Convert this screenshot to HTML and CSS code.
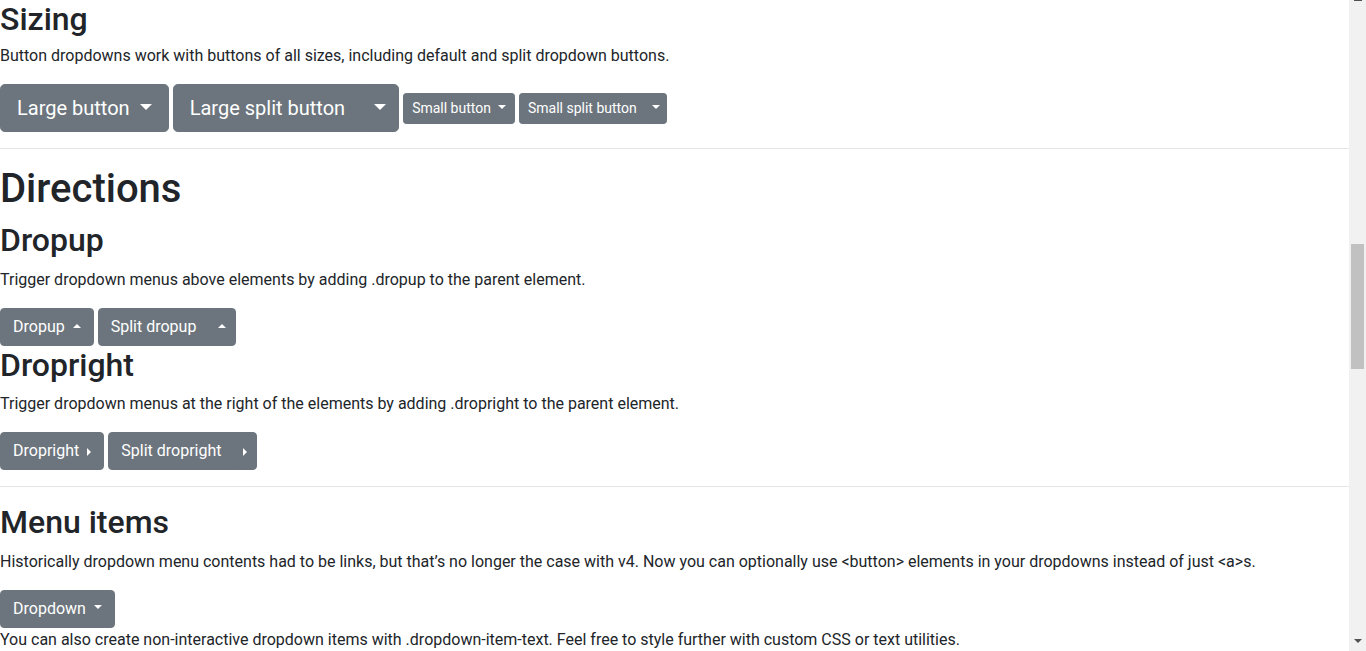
FILE: index.html
```html
<!DOCTYPE html>
<html lang="en">
<head>
<meta charset="utf-8">
<title>Dropdowns</title>
<link rel="stylesheet" href="styles.css">
</head>
<body>
<div class="page">
  <main class="content">
    <h2 class="first">Sizing</h2>
    <p>Button dropdowns work with buttons of all sizes, including default and split dropdown buttons.</p>
    <div class="btn-row">
      <div class="btn-group"><button class="btn btn-lg dropdown-toggle">Large button </button></div>
      <div class="btn-group"><button class="btn btn-lg">Large split button</button><button class="btn btn-lg dropdown-toggle toggle-split"></button></div>
      <div class="btn-group"><button class="btn btn-sm dropdown-toggle">Small button </button></div>
      <div class="btn-group"><button class="btn btn-sm">Small split button</button><button class="btn btn-sm dropdown-toggle toggle-split"></button></div>
    </div>
    <hr>
    <h1>Directions</h1>
    <h2>Dropup</h2>
    <p>Trigger dropdown menus above elements by adding .dropup to the parent element.</p>
    <div class="btn-row">
      <div class="btn-group"><button class="btn dropdown-toggle up">Dropup </button></div>
      <div class="btn-group"><button class="btn">Split dropup</button><button class="btn dropdown-toggle toggle-split up"></button></div>
    </div>
    <h2>Dropright</h2>
    <p>Trigger dropdown menus at the right of the elements by adding .dropright to the parent element.</p>
    <div class="btn-row">
      <div class="btn-group"><button class="btn dropdown-toggle right">Dropright </button></div>
      <div class="btn-group"><button class="btn">Split dropright</button><button class="btn dropdown-toggle toggle-split right"></button></div>
    </div>
    <hr>
    <h2>Menu items</h2>
    <p>Historically dropdown menu contents had to be links, but that’s no longer the case with v4. Now you can optionally use &lt;button&gt; elements in your dropdowns instead of just &lt;a&gt;s.</p>
    <div class="btn-row">
      <div class="btn-group"><button class="btn dropdown-toggle">Dropdown </button></div>
    </div>
    <p>You can also create non-interactive dropdown items with .dropdown-item-text. Feel free to style further with custom CSS or text utilities.</p>
  </main>
  <div class="scrollbar">
    <div class="sb-up"><span class="sb-up-mark"></span></div>
    <div class="sb-track"><div class="sb-thumb"></div></div>
    <div class="sb-down"><span class="sb-down-arrow"></span></div>
  </div>
</div>
</body>
</html>
```
FILE: styles.css
```css
html, body {
  margin: 0;
  padding: 0;
  height: 100%;
  overflow: hidden;
  background: #fff;
}
body {
  font-family: Roboto, "Noto Sans", "Liberation Sans", sans-serif;
  font-size: 16px;
  line-height: 1.5;
  color: #212529;
}
.page {
  display: flex;
  height: 651px;
}
.content {
  flex: 1;
  min-width: 0;
  overflow: hidden;
}
h1, h2 {
  margin: 0 0 8px;
  font-weight: 500;
  line-height: 1.2;
}
h1 { font-size: 40px; }
h2 { font-size: 32px; }
h2.first { margin-bottom: 6px; }
p { margin: 0 0 16px; }
hr {
  margin: 16px 0;
  border: 0;
  border-top: 1px solid rgba(0,0,0,.1);
  height: 0;
}
.btn-row {
  display: flex;
  align-items: center;
  gap: 4px;
}
.btn-group {
  display: inline-flex;
}
.btn {
  display: inline-block;
  font-family: inherit;
  font-weight: 400;
  color: #fff;
  background: #6c757d;
  border: 1px solid #6c757d;
  padding: 6px 12px;
  font-size: 16px;
  line-height: 1.5;
  border-radius: 4px;
  margin: 0;
  cursor: pointer;
  white-space: pre;
}
.btn-lg {
  padding: 8px 16px;
  font-size: 20px;
  border-radius: 4.8px;
}
.btn-sm {
  padding: 4px 8px;
  font-size: 14px;
  border-radius: 3.2px;
}
.btn-group .btn + .btn {
  margin-left: -1px;
  border-top-left-radius: 0;
  border-bottom-left-radius: 0;
}
.btn-group .btn:not(:last-child) {
  border-top-right-radius: 0;
  border-bottom-right-radius: 0;
}
.dropdown-toggle::after {
  display: inline-block;
  margin-left: .255em;
  vertical-align: .255em;
  content: "";
  border-top: .3em solid;
  border-right: .3em solid transparent;
  border-bottom: 0;
  border-left: .3em solid transparent;
}
.dropdown-toggle.up::after {
  border-top: 0;
  border-bottom: .3em solid;
}
.dropdown-toggle.right::after {
  vertical-align: 0;
  border-top: .3em solid transparent;
  border-right: 0;
  border-bottom: .3em solid transparent;
  border-left: .3em solid;
}
.toggle-split {
  padding-left: 9px;
  padding-right: 9px;
}
.toggle-split::after { margin-left: 0; }
.btn-lg.toggle-split { padding-left: 12px; padding-right: 12px; }
.btn-sm.toggle-split { padding-left: 6px; padding-right: 6px; }

.scrollbar {
  width: 17px;
  flex: none;
  background: #f1f1f1;
  display: flex;
  flex-direction: column;
}
.sb-up {
  height: 17px;
  display: flex;
  justify-content: center;
}
.sb-up-mark {
  width: 8px;
  height: 1px;
  background: #505050;
}
.sb-track {
  flex: 1;
  padding: 0 2px;
}
.sb-thumb {
  margin-top: 227px;
  height: 125px;
  background: #c1c1c1;
}
.sb-down {
  height: 17px;
  display: flex;
  justify-content: center;
  align-items: flex-start;
}
.sb-down-arrow {
  margin-top: 5px;
  width: 0;
  height: 0;
  border-top: 4px solid #505050;
  border-left: 4px solid transparent;
  border-right: 4px solid transparent;
}
```
